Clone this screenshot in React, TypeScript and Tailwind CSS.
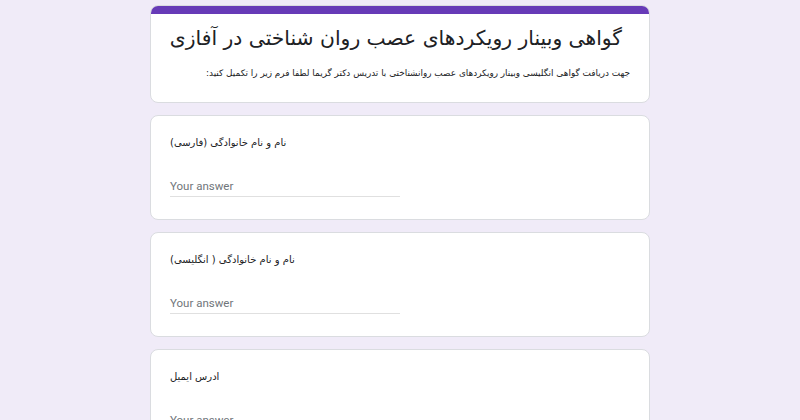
import React from "react";

const questions = [
  "نام و نام خانوادگی (فارسی)",
  "نام و نام خانوادگی ( انگلیسی)",
  "ادرس ایمیل",
];

const persian = { fontFamily: '"DejaVu Sans", "Noto Sans", sans-serif' };

const QuestionCard = ({ label }: { label: string }) => (
  <div className="bg-white rounded-lg border border-[#dadce0] px-[19px] pt-[19px] pb-[22px]">
    <div dir="rtl" className="text-left text-[10px] leading-4 text-[#202124]" style={persian}>
      {label}
    </div>
    <div className="mt-[25px] w-[230px] h-[21px] border-b border-[#e0e0e0] text-[11.5px] leading-5 text-[#70757a] font-['Roboto',sans-serif]">
      Your answer
    </div>
  </div>
);

export default function App() {
  return (
    <div className="min-h-screen bg-[#f0ebf8] pt-[5px] pb-10">
      <div className="w-[500px] mx-auto flex flex-col gap-3">
        <div className="bg-white rounded-lg border border-[#dadce0] overflow-hidden">
          <div className="h-2 bg-[#673ab7]" />
          <div dir="rtl" className="pr-[27px] pl-4 pt-[8px] pb-[21px] text-[#202124]" style={persian}>
            <h1 className="text-[20.3px] leading-8 font-normal whitespace-nowrap">
              گواهی وبینار رویکردهای عصب روان شناختی در آفازی
            </h1>
            <p className="mt-[11px] -mr-[8px] text-[8.9px] leading-4 whitespace-nowrap">
              جهت دریافت گواهی انگلیسی وبینار رویکردهای عصب روانشناختی با تدریس دکتر گریما لطفا فرم زیر را تکمیل کنید:
            </p>
          </div>
        </div>
        {questions.map((q) => (
          <QuestionCard key={q} label={q} />
        ))}
      </div>
    </div>
  );
}
